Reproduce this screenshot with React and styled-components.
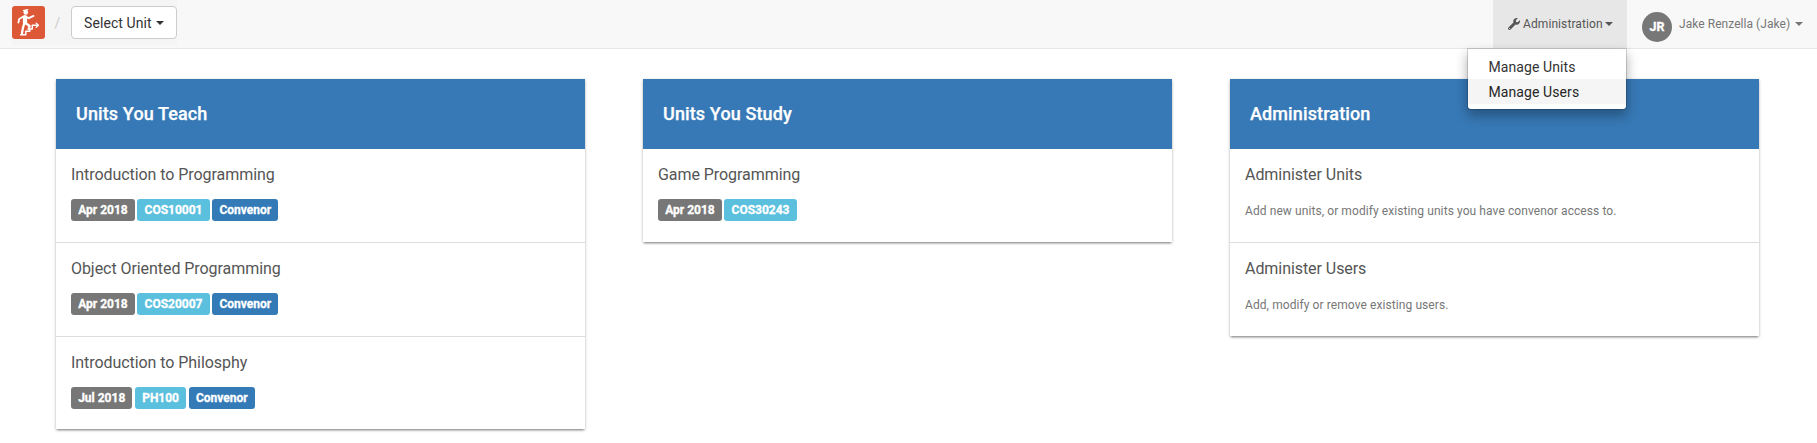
import React from "react";
import styled, { createGlobalStyle } from "styled-components";
import { FaWrench } from "react-icons/fa";

const GlobalStyle = createGlobalStyle`
  * { box-sizing: border-box; }
  body {
    margin: 0;
    background: #fff;
    color: #555;
    font-family: Roboto, "Liberation Sans", sans-serif;
    font-size: 14px;
    line-height: 20px;
  }
  h2, h3, p, ul { margin: 0; padding: 0; }
  ul { list-style: none; }
`;

const Navbar = styled.nav`
  display: flex;
  justify-content: space-between;
  height: 49px;
  padding-left: 12px;
  background: #f8f8f8;
  border-bottom: 1px solid #e7e7e7;
`;

const Breadcrumb = styled.div`
  display: flex;
  align-items: center;
  height: 46px;
  padding-bottom: 1px;
  background: #f5f5f5;
`;

const Logo = styled.svg`
  display: block;
  width: 33px;
  height: 33px;
`;

const Slash = styled.span`
  width: 26px;
  padding-right: 1px;
  text-align: center;
  color: #ccc;
`;

const UnitButton = styled.button`
  display: flex;
  align-items: center;
  width: 106px;
  height: 33px;
  padding: 0 0 0 12px;
  border: 1px solid #ccc;
  border-radius: 4px;
  background: #fff;
  color: #333;
  font: 14px/20px Roboto, sans-serif;
  letter-spacing: 0.08px;
`;

const Caret = styled.span`
  width: 0;
  height: 0;
  margin-left: ${(p) => p.$gap}px;
  border-top: 4px solid currentColor;
  border-left: 4px solid transparent;
  border-right: 4px solid transparent;
`;

const NavRight = styled.div`
  display: flex;
`;

const AdminMenu = styled.div`
  position: relative;
  display: flex;
  align-items: center;
  width: 134px;
  height: 48px;
  padding: 0 0 1px 15px;
  background: #e7e7e7;
  color: #555;
  font-size: 12px;
  letter-spacing: 0.09px;

  > svg { margin-right: 3px; }
`;

const Dropdown = styled.ul`
  position: absolute;
  z-index: 2;
  top: 48px;
  right: 0;
  width: 160px;
  height: 62px;
  padding: 5px 0;
  background: #fff;
  background-clip: padding-box;
  border: 1px solid rgba(0, 0, 0, 0.15);
  border-radius: 0 0 4px 4px;
  box-shadow: 0 6px 12px rgba(0, 0, 0, 0.3);
`;

const DropdownItem = styled.li`
  height: 25px;
  padding: 3px 20px 2px 20.5px;
  background: ${(p) => (p.$active ? "#f5f5f5" : "#fff")};
  color: ${(p) => (p.$active ? "#262626" : "#333")};
  font-size: 14px;
  line-height: 20px;
`;

const UserMenu = styled.div`
  display: flex;
  align-items: center;
  width: 190px;
  height: 48px;
  padding: 0 0 1px 15px;
  color: #777;
  font-size: 12px;
  letter-spacing: 0.05px;
`;

const Avatar = styled.span`
  display: flex;
  align-items: center;
  justify-content: center;
  width: 30px;
  height: 30px;
  margin: 7px 7px 0 0;
  border-radius: 50%;
  background: #777;
  color: #fff;
  font-size: 12.5px;
  font-weight: 700;
  -webkit-text-stroke: 0.3px #fff;
`;

const Main = styled.main`
  display: grid;
  grid-template-columns: repeat(3, 529px);
  column-gap: 58px;
  align-items: start;
  min-height: 394px;
  padding: 30px 56px 0;
`;

const Card = styled.section`
  background: #fff;
  box-shadow: 0 1px 3px rgba(0, 0, 0, 0.26), 0 2px 2px -1px rgba(0, 0, 0, 0.35);
`;

const CardTitle = styled.h2`
  height: 70px;
  padding: 0 20px;
  background: #3779b6;
  color: #fff;
  font-size: 18px;
  font-weight: 500;
  line-height: 70px;
  letter-spacing: 0.12px;
  -webkit-text-stroke: 0.25px #fff;
`;

const Row = styled.div`
  height: 93.4px;
  padding: 16px 15px 0;

  & + & {
    border-top: 1px solid #ddd;
  }
`;

const RowTitle = styled.h3`
  font-size: 16px;
  font-weight: 400;
  line-height: 20px;
  letter-spacing: -0.06px;
`;

const RowText = styled.p`
  margin-top: 16px;
  color: #777;
  font-size: 12px;
  line-height: 20px;
  letter-spacing: 0.085px;
`;

const Tags = styled.div`
  display: flex;
  gap: 2.6px;
  margin-top: 14px;
`;

const tones = { date: "#777", code: "#5bc0de", role: "#337ab7" };

const Tag = styled.span`
  height: 22px;
  padding: 0 7.15px;
  border-radius: 3px;
  background: ${(p) => tones[p.$tone]};
  color: #fff;
  font-size: 12px;
  font-weight: 700;
  line-height: 23px;
  -webkit-text-stroke: 0.3px #fff;
`;

const teaching = [
  ["Introduction to Programming", "Apr 2018", "COS10001", "Convenor"],
  ["Object Oriented Programming", "Apr 2018", "COS20007", "Convenor"],
  ["Introduction to Philosphy", "Jul 2018", "PH100", "Convenor"],
];
const studying = [["Game Programming", "Apr 2018", "COS30243"]];

function UnitCard({ title, units }) {
  return (
    <Card>
      <CardTitle>{title}</CardTitle>
      {units.map(([name, date, code, role]) => (
        <Row key={name}>
          <RowTitle>{name}</RowTitle>
          <Tags>
            <Tag $tone="date">{date}</Tag>
            <Tag $tone="code">{code}</Tag>
            {role && <Tag $tone="role">{role}</Tag>}
          </Tags>
        </Row>
      ))}
    </Card>
  );
}

function ClimberLogo() {
  return (
    <Logo viewBox="0 0 33 33">
      <rect width="33" height="33" rx="3" fill="#dc5836" />
      <g fill="none" stroke="#fff" strokeLinecap="round" strokeLinejoin="round">
        <ellipse cx="13.8" cy="6.2" rx="2.3" ry="2.5" fill="#fff" stroke="none" />
        <path d="M11.3 4.6 15.8 3.6" strokeWidth="1.1" />
        <path d="M13 11 13 16.5" strokeWidth="4.2" />
        <path d="M11.5 10.5 7.2 13 6.4 16.5" strokeWidth="1.8" />
        <path d="M14 10.8 16.8 12.2 21.5 9.9" strokeWidth="1.9" />
        <path d="M12.2 17.5 10.9 22 10 27" strokeWidth="2.3" />
        <path d="M13.8 17.3 17.6 20 16.6 23" strokeWidth="2.3" />
        <path d="M8.6 28.8H13.8V25.2H17.8V23H20.3V19.2H25.3" strokeWidth="1.5" />
        <path d="M24.2 17.2 26.4 19.2 24.2 21.2" strokeWidth="1.3" />
      </g>
    </Logo>
  );
}

export default function App() {
  return (
    <>
      <GlobalStyle />
      <Navbar>
        <Breadcrumb>
          <ClimberLogo />
          <Slash>/</Slash>
          <UnitButton>
            Select Unit
            <Caret $gap={4.5} />
          </UnitButton>
        </Breadcrumb>
        <NavRight>
          <AdminMenu>
            <FaWrench size={12} />
            Administration
            <Caret $gap={2} />
            <Dropdown>
              <DropdownItem>Manage Units</DropdownItem>
              <DropdownItem $active>Manage Users</DropdownItem>
            </Dropdown>
          </AdminMenu>
          <UserMenu>
            <Avatar>JR</Avatar>
            Jake Renzella (Jake)
            <Caret $gap={5} />
          </UserMenu>
        </NavRight>
      </Navbar>
      <Main>
        <UnitCard title="Units You Teach" units={teaching} />
        <UnitCard title="Units You Study" units={studying} />
        <Card>
          <CardTitle>Administration</CardTitle>
          <Row>
            <RowTitle>Administer Units</RowTitle>
            <RowText>Add new units, or modify existing units you have convenor access to.</RowText>
          </Row>
          <Row>
            <RowTitle>Administer Users</RowTitle>
            <RowText>Add, modify or remove existing users.</RowText>
          </Row>
        </Card>
      </Main>
    </>
  );
}
